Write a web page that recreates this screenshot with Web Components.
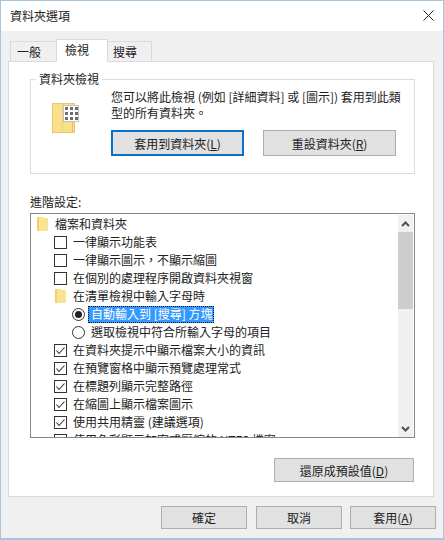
<!DOCTYPE html>
<html>
<head>
<meta charset="utf-8">
<style>
html, body { margin: 0; padding: 0; background: #f0f0f0; }
body { font: 12px "Noto Sans CJK TC", "Liberation Sans", sans-serif; color: #1a1a1a; }
</style>
</head>
<body>
<folder-dialog>
  <win-titlebar slot="title">資料夾選項</win-titlebar>
  <tab-strip slot="tabs"></tab-strip>
  <group-box slot="page" label="資料夾檢視">
    <folder-views></folder-views>
  </group-box>
  <settings-list slot="page"></settings-list>
  <div slot="page" style="display:flex;justify-content:flex-end;padding:20px 19px 0 0">
    <win-button w="140" h="24">還原成預設值(<u>D</u>)</win-button>
  </div>
  <win-button slot="foot" w="86" h="23" style="margin-right:1px">確定</win-button>
  <win-button slot="foot" w="86" h="23">取消</win-button>
  <win-button slot="foot" w="86" h="23">套用(<u>A</u>)</win-button>
</folder-dialog>

<script>
// fenêtre principale
const dialogTpl = document.createElement("template");
dialogTpl.innerHTML = `
<style>
:host { display: flex; flex-direction: column; box-sizing: border-box; width: 444px; height: 540px; border: 1px solid #a9c3da; border-bottom-width: 2px; background: #f0f0f0; overflow: hidden; }
.body { flex: 1; display: flex; flex-direction: column; padding: 8px 8px 0 7px; }
.page { box-sizing: border-box; height: 436px; background: #fff; border: 1px solid #d9d9d9; padding: 17px 0 0 21px; margin-right: 1px; }
.foot { display: flex; justify-content: flex-end; gap: 8px; padding: 9px 0 0 0; margin-right: -1px; }
</style>
<slot name="title"></slot>
<div class="body">
  <slot name="tabs"></slot>
  <div class="page"><slot name="page"></slot></div>
  <div class="foot"><slot name="foot"></slot></div>
</div>`;
class FolderDialog extends HTMLElement {
  constructor() {
    super();
    this.attachShadow({ mode: "open" }).appendChild(dialogTpl.content.cloneNode(true));
  }
}
customElements.define("folder-dialog", FolderDialog);

// barre de titre
const titleTpl = document.createElement("template");
titleTpl.innerHTML = `
<style>
:host { display: flex; align-items: center; justify-content: space-between; box-sizing: border-box; height: 30px; background: #fff; padding: 0 9px 1px 9px; color: #222; }
span { margin-bottom: 1px; }
svg { display: block; }
</style>
<span><slot></slot></span>
<svg width="11" height="11" viewBox="0 0 11 11"><path d="M.5 .5L10.5 10.5M10.5 .5L.5 10.5" stroke="#222" stroke-width="1" fill="none"/></svg>`;
class WinTitlebar extends HTMLElement {
  constructor() {
    super();
    this.attachShadow({ mode: "open" }).appendChild(titleTpl.content.cloneNode(true));
  }
}
customElements.define("win-titlebar", WinTitlebar);

// onglets
const tabsTpl = document.createElement("template");
tabsTpl.innerHTML = `
<style>
:host { display: flex; height: 23px; align-items: flex-end; position: relative; z-index: 1; margin-bottom: -1px; padding-left: 2px; }
.t { box-sizing: border-box; height: 21px; line-height: 19px; border: 1px solid #d9d9d9; background: #f0f0f0; margin-right: -1px; color: #222; }
.a { width: 47px; padding-left: 6px; }
.c { width: 45px; padding-left: 5px; }
.on { width: 52px; padding-left: 8px; height: 23px; line-height: 20px; background: #fff; border-bottom-color: #fff; position: relative; z-index: 1; }
</style>
<div class="t a">一般</div><div class="t on">檢視</div><div class="t c">搜尋</div>`;
class TabStrip extends HTMLElement {
  constructor() {
    super();
    this.attachShadow({ mode: "open" }).appendChild(tabsTpl.content.cloneNode(true));
  }
}
customElements.define("tab-strip", TabStrip);

// cadre avec légende
const groupTpl = document.createElement("template");
groupTpl.innerHTML = `
<style>
:host { display: block; box-sizing: border-box; width: 385px; height: 95px; border: 1px solid #dcdcdc; position: relative; }
.lg { position: absolute; left: 5px; top: -9px; background: #fff; padding: 0 3px; line-height: 16px; color: #222; }
</style>
<span class="lg"></span>
<slot></slot>`;
class GroupBox extends HTMLElement {
  constructor() {
    super();
    this.attachShadow({ mode: "open" }).appendChild(groupTpl.content.cloneNode(true));
  }
  connectedCallback() {
    this.shadowRoot.querySelector(".lg").textContent = this.getAttribute("label");
  }
}
customElements.define("group-box", GroupBox);

// bouton
const btnTpl = document.createElement("template");
btnTpl.innerHTML = `
<style>
:host { display: inline-flex; align-items: center; justify-content: center; box-sizing: border-box; background: #e1e1e1; border: 1px solid #adadad; color: #222; white-space: nowrap; }
:host([primary]) { border: 2px solid #0a72c6; }
</style>
<span><slot></slot></span>`;
class WinButton extends HTMLElement {
  constructor() {
    super();
    this.attachShadow({ mode: "open" }).appendChild(btnTpl.content.cloneNode(true));
  }
  connectedCallback() {
    this.style.width = this.getAttribute("w") + "px";
    this.style.height = this.getAttribute("h") + "px";
  }
}
customElements.define("win-button", WinButton);

// icônes dossier
const smallFolder = `<svg width="11" height="14" viewBox="0 0 11 14"><path d="M0 1Q0 0 1 0H6L7 1H10Q11 1 11 2V13Q11 14 10 14H1Q0 14 0 13Z" fill="#fbe393"/><path d="M0 1Q0 0 1 0H2V14H1Q0 14 0 13Z" fill="#f1cf6c"/></svg>`;

// contenu du cadre "Dossier"
const viewsTpl = document.createElement("template");
viewsTpl.innerHTML = `
<style>
:host { display: flex; padding: 9px 0 0 21px; }
.ic { width: 59px; padding-top: 14px; }
p { margin: 0; line-height: 16px; width: 292px; color: #222; }
.btns { display: flex; gap: 19px; margin-top: 9px; }
svg { display: block; }
</style>
<div class="ic">
  <svg width="28" height="30" viewBox="0 0 28 30">
    <rect x="0" y="0" width="23" height="30" fill="#e9c968"/>
    <rect x="1" y="1" width="21" height="28" fill="#fbe08c"/>
    <rect x="10" y="1" width="1" height="28" fill="#ecd07a"/>
    <rect x="20" y="18" width="1" height="11" fill="#e3c264"/>
    <rect x="11.5" y="2.5" width="15" height="16" fill="#fff" stroke="#c4c4c4" stroke-width="1"/>
    <g fill="#6d6d6d">
      <rect x="13" y="4" width="3" height="3"/><rect x="18" y="4" width="3" height="3"/><rect x="23" y="4" width="3" height="3"/>
      <rect x="13" y="9" width="3" height="3"/><rect x="18" y="9" width="3" height="3"/><rect x="23" y="9" width="3" height="3"/>
      <rect x="13" y="14" width="3" height="3"/><rect x="18" y="14" width="3" height="3"/><rect x="23" y="14" width="3" height="3"/>
    </g>
  </svg>
</div>
<div>
  <p>您可以將此檢視 (例如 [詳細資料] 或 [圖示]) 套用到此類型的所有資料夾。</p>
  <div class="btns">
    <win-button w="133" h="26" primary>套用到資料夾(<u>L</u>)</win-button>
    <win-button w="133" h="26">重設資料夾(<u>R</u>)</win-button>
  </div>
</div>`;
class FolderViews extends HTMLElement {
  constructor() {
    super();
    this.attachShadow({ mode: "open" }).appendChild(viewsTpl.content.cloneNode(true));
  }
}
customElements.define("folder-views", FolderViews);

// une ligne de l'arbre
const rowTpl = document.createElement("template");
rowTpl.innerHTML = `
<style>
:host { display: flex; align-items: center; height: 18px; white-space: nowrap; color: #222; }
.m { width: 13px; height: 13px; margin-right: 6px; flex: none; display: flex; align-items: center; justify-content: center; }
svg { display: block; }
.txt { margin-bottom: 2px; }
.sel { background: #3399ff; color: #fff; outline: 1px dotted #111; outline-offset: -1px; margin: 0 0 0 -3px; padding: 0 1px 1px 3px; line-height: 16px; }
</style>
<span class="m"></span><span class="txt"><slot></slot></span>`;
const marks = {
  folder: smallFolder,
  off: `<svg width="13" height="13"><rect x=".5" y=".5" width="12" height="12" fill="#fff" stroke="#333"/></svg>`,
  on: `<svg width="13" height="13"><rect x=".5" y=".5" width="12" height="12" fill="#fff" stroke="#333"/><path d="M2.5 6.5L5 9.5L10.5 3.5" fill="none" stroke="#333" stroke-width="1.1"/></svg>`,
  rad: `<svg width="13" height="13"><circle cx="6.5" cy="6.5" r="6" fill="#fff" stroke="#333"/></svg>`,
  radon: `<svg width="13" height="13"><circle cx="6.5" cy="6.5" r="6" fill="#fff" stroke="#333"/><circle cx="6.5" cy="6.5" r="3.5" fill="#222"/></svg>`
};
class TreeRow extends HTMLElement {
  constructor() {
    super();
    this.attachShadow({ mode: "open" }).appendChild(rowTpl.content.cloneNode(true));
  }
  connectedCallback() {
    const r = this.shadowRoot;
    r.querySelector(".m").innerHTML = marks[this.getAttribute("kind")];
    this.style.paddingLeft = (this.getAttribute("indent") || 0) + "px";
    if (this.hasAttribute("selected")) r.querySelector(".txt").classList.add("sel");
  }
}
customElements.define("tree-row", TreeRow);

// liste des paramètres avancés
const listTpl = document.createElement("template");
listTpl.innerHTML = `
<style>
:host { display: block; width: 385px; margin-top: 16px; }
.cap { line-height: 16px; height: 23px; box-sizing: border-box; padding-top: 4px; color: #222; }
.box { box-sizing: border-box; height: 225px; border: 1px solid #828790; background: #fff; display: flex; overflow: hidden; }
.rows { flex: 1; overflow: hidden; padding: 1px 0 0 5px; min-width: 0; }
.bar { width: 15px; margin: 1px 1px 0 0; background: #f0f0f0; display: flex; flex-direction: column; }
.arr { height: 17px; display: flex; align-items: center; justify-content: center; flex: none; }
.thumb { height: 77px; background: #cdcdcd; flex: none; }
.sp { flex: 1; }
svg { display: block; }
</style>
<div class="cap">進階設定:</div>
<div class="box">
  <div class="rows">
    <tree-row kind="folder">檔案和資料夾</tree-row>
    <tree-row kind="off" indent="18">一律顯示功能表</tree-row>
    <tree-row kind="off" indent="18">一律顯示圖示，不顯示縮圖</tree-row>
    <tree-row kind="off" indent="18">在個別的處理程序開啟資料夾視窗</tree-row>
    <tree-row kind="folder" indent="18">在清單檢視中輸入字母時</tree-row>
    <tree-row kind="radon" indent="36" selected>自動輸入到 [搜尋] 方塊</tree-row>
    <tree-row kind="rad" indent="36">選取檢視中符合所輸入字母的項目</tree-row>
    <tree-row kind="on" indent="18">在資料夾提示中顯示檔案大小的資訊</tree-row>
    <tree-row kind="on" indent="18">在預覽窗格中顯示預覽處理常式</tree-row>
    <tree-row kind="on" indent="18">在標題列顯示完整路徑</tree-row>
    <tree-row kind="on" indent="18">在縮圖上顯示檔案圖示</tree-row>
    <tree-row kind="on" indent="18">使用共用精靈 (建議選項)</tree-row>
    <tree-row kind="on" indent="18">使用色彩顯示加密或壓縮的 NTFS 檔案</tree-row>
  </div>
  <div class="bar">
    <div class="arr"><svg width="9" height="6"><path d="M1 5L4.5 1.5L8 5" fill="none" stroke="#505050" stroke-width="2"/></svg></div>
    <div class="thumb"></div>
    <div class="sp"></div>
    <div class="arr"><svg width="9" height="6"><path d="M1 1L4.5 4.5L8 1" fill="none" stroke="#505050" stroke-width="2"/></svg></div>
  </div>
</div>`;
class SettingsList extends HTMLElement {
  constructor() {
    super();
    this.attachShadow({ mode: "open" }).appendChild(listTpl.content.cloneNode(true));
  }
}
customElements.define("settings-list", SettingsList);
</script>
</body>
</html>
